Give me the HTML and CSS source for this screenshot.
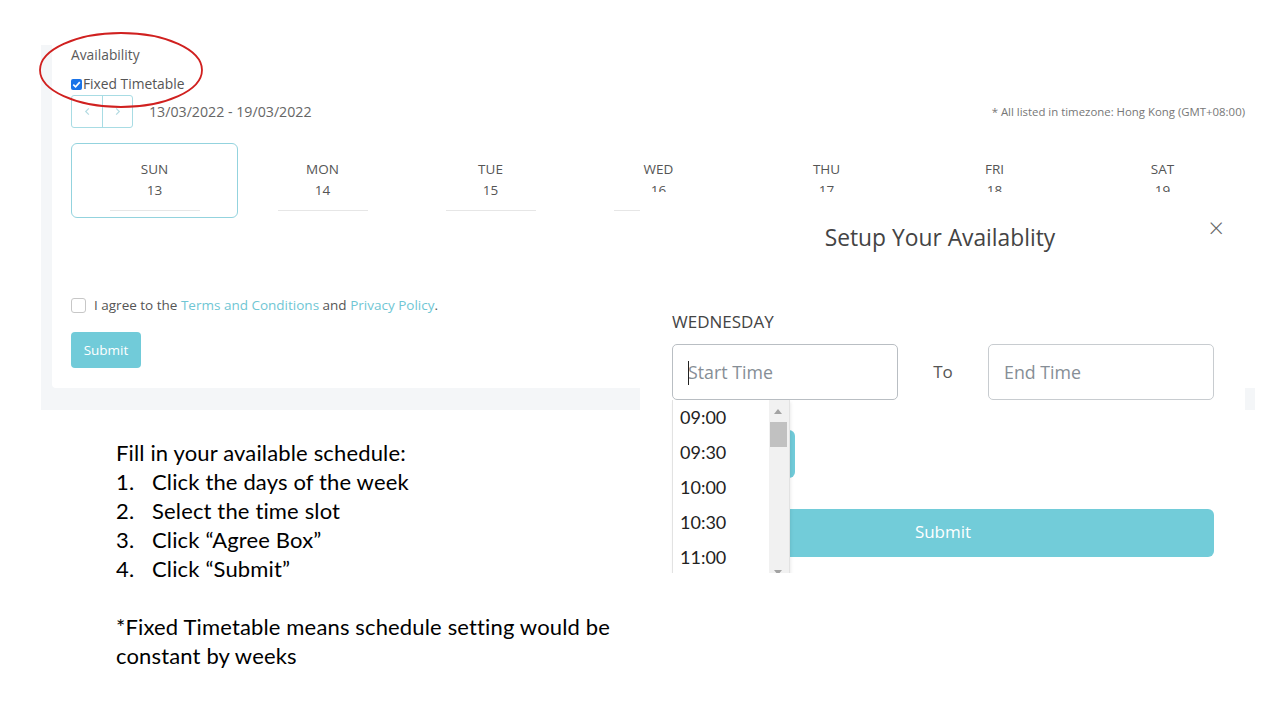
FILE: index.html
```html
<!DOCTYPE html>
<html>
<head>
<meta charset="utf-8">
<link rel="stylesheet" href="styles.css">
</head>
<body>
<div class="slide">
  <div class="shot-main">
    <div class="card">
      <div class="label">Availability</div>
      <label class="fixed"><span class="cb-checked"><svg viewBox="0 0 12 12" width="11" height="11"><path d="M2.5 6.2 L5 8.6 L9.6 3.4" fill="none" stroke="#fff" stroke-width="1.8"/></svg></span>Fixed Timetable</label>
      <div class="navrow">
        <div class="navbtns">
          <span class="nb"><svg viewBox="0 0 10 10" width="9" height="9"><path d="M6.5 1.5 L3 5 L6.5 8.5" fill="none" stroke="#b3dbe2" stroke-width="1.3"/></svg></span>
          <span class="nb nb2"><svg viewBox="0 0 10 10" width="9" height="9"><path d="M3.5 1.5 L7 5 L3.5 8.5" fill="none" stroke="#b3dbe2" stroke-width="1.3"/></svg></span>
        </div>
        <span class="range">13/03/2022 - 19/03/2022</span>
        <span class="tz">* All listed in timezone: Hong Kong (GMT+08:00)</span>
      </div>
      <div class="days">
        <div class="day active"><div class="dn">SUN</div><div class="dd">13</div><div class="ul"></div></div>
        <div class="day"><div class="dn">MON</div><div class="dd">14</div><div class="ul"></div></div>
        <div class="day"><div class="dn">TUE</div><div class="dd">15</div><div class="ul"></div></div>
        <div class="day"><div class="dn">WED</div><div class="dd">16</div><div class="ul"></div></div>
        <div class="day"><div class="dn">THU</div><div class="dd">17</div><div class="ul"></div></div>
        <div class="day"><div class="dn">FRI</div><div class="dd">18</div><div class="ul"></div></div>
        <div class="day"><div class="dn">SAT</div><div class="dd">19</div><div class="ul"></div></div>
      </div>
      <div class="agree"><span class="cb"></span><span>I agree to the <span class="lnk">Terms and Conditions</span> and <span class="lnk">Privacy Policy</span>.</span></div>
      <div class="submit-sm">Submit</div>
    </div>
  </div>

  <svg class="ring" width="170" height="82" viewBox="0 0 170 82"><ellipse cx="83" cy="39" rx="81" ry="37" fill="none" stroke="#d0201f" stroke-width="1.8"/></svg>

  <div class="shot-modal">
    <div class="mhead">
      <div class="mtitle">Setup Your Availablity</div>
      <span class="close">×</span>
    </div>
    <div class="wday">WEDNESDAY</div>
    <div class="trow">
      <div class="inp focus"><span class="caret"></span>Start Time</div>
      <div class="to">To</div>
      <div class="inp">End Time</div>
    </div>
    <div class="addrow"><div class="addbtn"></div></div>
    <div class="msubmit">Submit</div>
    <div class="dropdown">
      <div class="opts">
        <div class="opt">09:00</div>
        <div class="opt">09:30</div>
        <div class="opt">10:00</div>
        <div class="opt">10:30</div>
        <div class="opt">11:00</div>
      </div>
      <div class="sbar">
        <span class="arr up"></span>
        <span class="thumb"></span>
        <span class="arr down"></span>
      </div>
    </div>
  </div>

  <div class="notes">
    <div>Fill in your available schedule:</div>
    <div class="li"><span class="num">1.</span>Click the days of the week</div>
    <div class="li"><span class="num">2.</span>Select the time slot</div>
    <div class="li"><span class="num">3.</span>Click “Agree Box”</div>
    <div class="li"><span class="num">4.</span>Click “Submit”</div>
    <div class="gap"></div>
    <div>*Fixed Timetable means schedule setting would be</div>
    <div>constant by weeks</div>
  </div>
</div>
</body>
</html>
```

FILE: styles.css
```css
* { box-sizing: border-box; }
html, body { margin: 0; padding: 0; background: #fff; }
.slide { position: relative; width: 1280px; height: 720px; overflow: hidden; background: #fff; }

.shot-main {
  position: absolute; left: 41px; top: 45px; width: 1214px; height: 365px;
  background: #f4f6f8; padding-left: 11px;
  font-family: "Open Sans", sans-serif; color: #555;
}
.card {
  background: #fff; height: 343px; padding: 0 10px 0 19px;
  display: flex; flex-direction: column;
  border-bottom-left-radius: 4px;
}
.label { font-size: 13.8px; line-height: 20px; color: #5a5a5a; }
.fixed { display: flex; align-items: center; font-size: 13.8px; line-height: 20px; margin-top: 9px; color: #555; }
.cb-checked { width: 11px; height: 11px; border-radius: 2px; background: #1a73e8; display: inline-flex; align-items: center; justify-content: center; margin-right: 1px; }
.navrow { display: flex; align-items: center; height: 33px; margin-top: 1px; }
.navbtns { display: flex; border: 1px solid #a8dce4; border-radius: 3px; height: 33px; }
.nb { width: 30px; display: flex; align-items: center; justify-content: center; }
.nb2 { border-left: 1px solid #a8dce4; }
.range { margin-left: 16px; font-size: 14.2px; color: #666; }
.tz { margin-left: auto; font-size: 11.4px; color: #777; }

.days { display: grid; grid-template-columns: repeat(7, 168px); margin-top: 15px; }
.day { height: 75px; padding-top: 15px; display: flex; flex-direction: column; align-items: center; border: 1px solid transparent; border-radius: 6px; width: 167px; }
.day.active { border-color: #93d3de; }
.dn, .dd { font-size: 13.5px; line-height: 21px; color: #555; }
.ul { width: 90px; height: 1px; background: #e6e6e6; margin-top: 9px; }

.agree { display: flex; align-items: center; margin-top: 78px; font-size: 13.5px; color: #555; }
.cb { width: 15px; height: 15px; border: 1px solid #c7c7c7; border-radius: 3px; margin-right: 8px; background: #fff; }
.lnk { color: #6fc6d4; }
.submit-sm { margin-top: 18px; width: 70px; height: 36px; border-radius: 4px; background: #71cbd9; color: #fff; font-size: 13.5px; display: flex; align-items: center; justify-content: center; }

.ring { position: absolute; left: 38px; top: 31px; }

.shot-modal {
  position: absolute; left: 640px; top: 192px; width: 605px; height: 381px;
  background: #fff; overflow: hidden; padding: 0 31px 0 32px;
  font-family: "Open Sans", sans-serif;
}
.mhead { position: relative; height: 92px; padding-top: 30px; display: flex; justify-content: center; }
.mtitle { font-size: 22.8px; line-height: 32px; color: #444; margin-right: 6px; }
.close { position: absolute; right: -10px; top: 21px; font-size: 27px; line-height: 30px; color: #666; font-weight: 300; }
.wday { margin-top: 28px; font-size: 17px; line-height: 20px; color: #444; }
.trow { display: flex; align-items: center; margin-top: 12px; }
.inp { position: relative; width: 226px; height: 56px; border: 1px solid #c8ccd0; border-radius: 5px; padding-left: 15px; display: flex; align-items: center; font-size: 17.8px; color: #868e96; }
.inp.focus { border-color: #b9bec3; }
.caret { position: absolute; left: 15px; top: 16px; width: 1px; height: 24px; background: #222; }
.to { width: 90px; text-align: center; font-size: 17px; color: #555; padding-bottom: 2px; }
.addrow { margin-top: 30px; height: 48px; }
.addbtn { margin-left: 40px; width: 83px; height: 48px; border-radius: 6px; background: #71cbd9; }
.msubmit { margin-top: 31px; height: 48px; border-radius: 6px; background: #72ccd9; color: #fff; font-size: 17px; display: flex; align-items: center; justify-content: center; padding-bottom: 4px; }

.dropdown {
  position: absolute; left: 32px; top: 208px; width: 118px; height: 190px;
  background: #fff; border-left: 1px solid #e2e2e2; border-right: 1px solid #e2e2e2;
  box-shadow: 1px 2px 3px rgba(0,0,0,0.08);
  display: flex;
}
.opts { flex: 1; }
.opt { height: 35px; line-height: 35px; padding-left: 7px; font-size: 18px; color: #222; font-family: "Lato", sans-serif; }
.sbar { position: relative; width: 20px; background: #f1f1f1; }
.thumb { position: absolute; left: 1px; top: 22px; width: 17px; height: 25px; background: #c1c1c1; }
.arr { position: absolute; left: 5px; width: 0; height: 0; border-left: 4px solid transparent; border-right: 4px solid transparent; }
.arr.up { top: 9px; border-bottom: 5px solid #a3a3a3; }
.arr.down { top: 170px; border-top: 5px solid #a3a3a3; }

.notes {
  position: absolute; left: 116px; top: 438px;
  font-family: "Lato", "Open Sans", sans-serif; font-size: 22px; line-height: 29px; color: #000;
  letter-spacing: 0.15px;
}
.li { display: flex; }
.num { width: 36px; }
.gap { height: 29px; }
```
